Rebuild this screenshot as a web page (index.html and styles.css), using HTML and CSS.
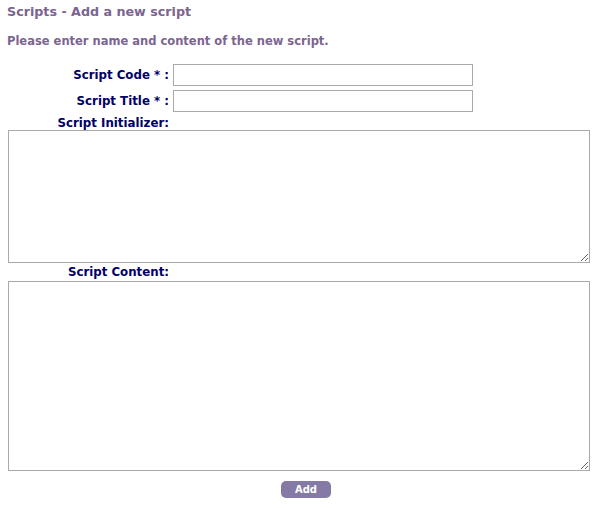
FILE: index.html
```html
<!DOCTYPE html>
<html>
<head>
<meta charset="utf-8">
<link rel="stylesheet" href="styles.css">
</head>
<body>
<div class="page">
  <h1 class="title">Scripts - Add a new script</h1>
  <p class="intro">Please enter name and content of the new script.</p>
  <form class="form">
    <div class="row">
      <label class="label">Script Code * :</label>
      <input class="field" type="text">
    </div>
    <div class="row">
      <label class="label">Script Title * :</label>
      <input class="field" type="text">
    </div>
    <div class="row-label">
      <label class="label">Script Initializer:</label>
    </div>
    <textarea class="area area-init"></textarea>
    <div class="row-label row-label-content">
      <label class="label">Script Content:</label>
    </div>
    <textarea class="area area-content"></textarea>
    <div class="actions">
      <button type="button" class="btn">Add</button>
    </div>
  </form>
</div>
</body>
</html>
```
FILE: styles.css
```css
html, body {
  margin: 0;
  padding: 0;
  background: #ffffff;
}
.page {
  padding: 4px 8px 0 7px;
  font-family: "DejaVu Sans", Verdana, sans-serif;
  font-weight: bold;
}
.title {
  margin: 0;
  font-size: 12.7px;
  line-height: 16px;
  color: #7b6590;
  font-weight: bold;
}
.intro {
  margin: 13px 0 0 0;
  font-size: 11.5px;
  line-height: 16px;
  color: #7b6590;
}
.form {
  margin-top: 15px;
  display: flex;
  flex-direction: column;
}
.row {
  display: grid;
  grid-template-columns: 162px 300px;
  column-gap: 4px;
  align-items: center;
  margin-bottom: 4px;
}
.row-label {
  display: grid;
  grid-template-columns: 162px;
}
.row-label-content {
  margin-top: 2px;
}
.label {
  text-align: right;
  font-size: 11.8px;
  line-height: 14px;
  color: #000066;
  white-space: nowrap;
}
.field {
  box-sizing: border-box;
  width: 300px;
  height: 22px;
  margin: 0;
  border: 1px solid #a9a9a9;
  background: #fff;
  padding: 1px 2px;
}
.area {
  box-sizing: border-box;
  width: 582px;
  margin: 0 0 0 1px;
  border: 1px solid #a9a9a9;
  padding: 2px;
  display: block;
}
.area-init {
  height: 133px;
}
.area-content {
  height: 190px;
  margin-top: 2px;
}
.actions {
  display: flex;
  justify-content: center;
  padding-left: 15px;
  margin-top: 10px;
}
.btn {
  width: 50px;
  height: 17px;
  padding: 0;
  border: none;
  border-radius: 5px;
  background: #857aa5;
  color: #ffffff;
  font-family: "DejaVu Sans", Verdana, sans-serif;
  font-weight: bold;
  font-size: 10px;
  line-height: 17px;
}
```
